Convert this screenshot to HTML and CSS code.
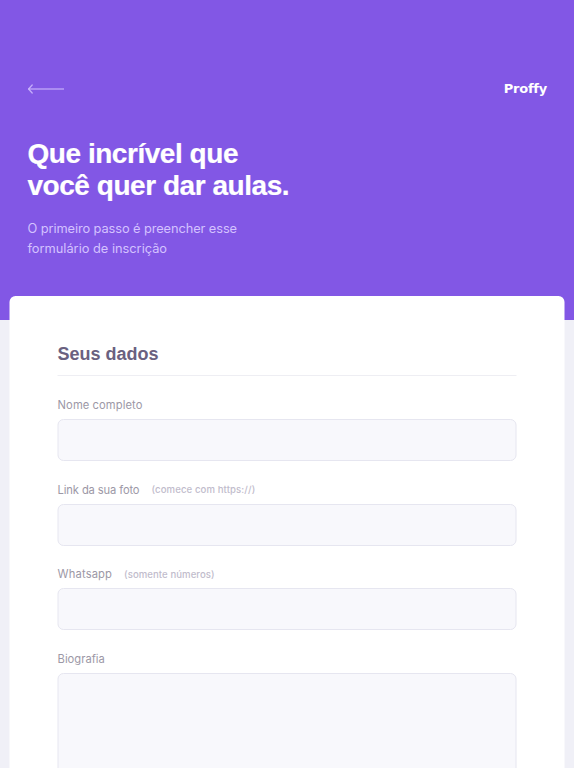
FILE: index.html
```html
<!DOCTYPE html>
<html lang="pt-BR">
<head>
<meta charset="utf-8">
<title>Proffy</title>
<link rel="stylesheet" href="styles.css">
</head>
<body>
<div class="page">
  <header class="header">
    <div class="top-bar">
      <a class="back" aria-label="Voltar">
        <svg width="37" height="12" viewBox="0 0 37 12" fill="none" stroke="#d4c2ff">
          <path d="M.3 6H36" stroke-width="1.8" opacity=".5"/>
          <path d="M4.2 2L.6 6L4.2 10" stroke-width="1.3" stroke-linecap="round" stroke-linejoin="round" opacity=".8"/>
        </svg>
      </a>
      <span class="logo">Proffy</span>
    </div>
    <h1 class="title">Que incrível que<br>você quer dar aulas.</h1>
    <p class="subtitle"><span class="sub-a">O primeiro passo é preencher esse</span><br>formulário de inscrição</p>
  </header>
  <main class="card">
    <h2 class="legend">Seus dados</h2>
    <div class="field">
      <label class="l-name" for="name">Nome completo</label>
      <input id="name">
    </div>
    <div class="field">
      <label for="photo"><span class="l-photo">Link da sua foto</span><small class="h-photo">(comece com https://)</small></label>
      <input id="photo">
    </div>
    <div class="field">
      <label for="whatsapp"><span class="l-whats">Whatsapp</span><small class="h-whats">(somente números)</small></label>
      <input id="whatsapp">
    </div>
    <div class="field">
      <label for="bio">Biografia</label>
      <textarea id="bio"></textarea>
    </div>
  </main>
</div>
</body>
</html>
```
FILE: styles.css
```css
* { box-sizing: border-box; margin: 0; padding: 0; }
html { background: #fff; }
body { font-family: Inter, "Open Sans", sans-serif; overflow: hidden; }
.page { height: 768px; overflow: hidden; background: #f0f0f7; }
.header { height: 320px; padding: 80px 27px 0 27.5px; background: #8257e5; }
.top-bar { display: flex; justify-content: space-between; align-items: center; height: 18px; }
.back { display: flex; }
.logo { font: bold 13px/18px "DejaVu Sans", sans-serif; letter-spacing: -.25px; color: #fff; }
.title { margin-top: 40px; font: bold 28px/32px "Liberation Sans", Arial, sans-serif; letter-spacing: -.46px; -webkit-text-stroke: .2px #fff; color: #fff; white-space: nowrap; }
.subtitle { margin-top: 17px; font-size: 12.8px; line-height: 20px; color: #d4c2ff; white-space: nowrap; }
.sub-a { letter-spacing: -.08px; }
.card { width: 555px; height: 600px; margin: -24px auto 0; padding: 44px 48px 0; background: #fff; border-radius: 6px; transform: translateX(-.5px); }
.legend { height: 36px; border-bottom: 1px solid #eeeef3; padding-left: .6px; font: bold 18px/28px "Liberation Sans", Arial, sans-serif; color: #6a6180; margin-bottom: 19px; }
.field { margin-bottom: 18.7px; }
label { display: flex; align-items: center; height: 20px; margin-bottom: 4px; padding-left: .6px; font-size: 11.2px; color: #9c98a6; white-space: nowrap; }
.l-name { letter-spacing: .08px; }
.l-photo { letter-spacing: -.13px; }
.l-whats { letter-spacing: .14px; }
small { margin-left: 12px; font-size: 9.6px; font-weight: 500; color: #c1bccc; }
.h-photo { letter-spacing: .1px; }
.h-whats { letter-spacing: .06px; }
input, textarea { display: block; width: 100%; height: 42px; background: #f8f8fc; border: 1px solid #e6e6f0; border-radius: 6px; resize: none; outline: none; }
textarea { height: 240px; }
```
